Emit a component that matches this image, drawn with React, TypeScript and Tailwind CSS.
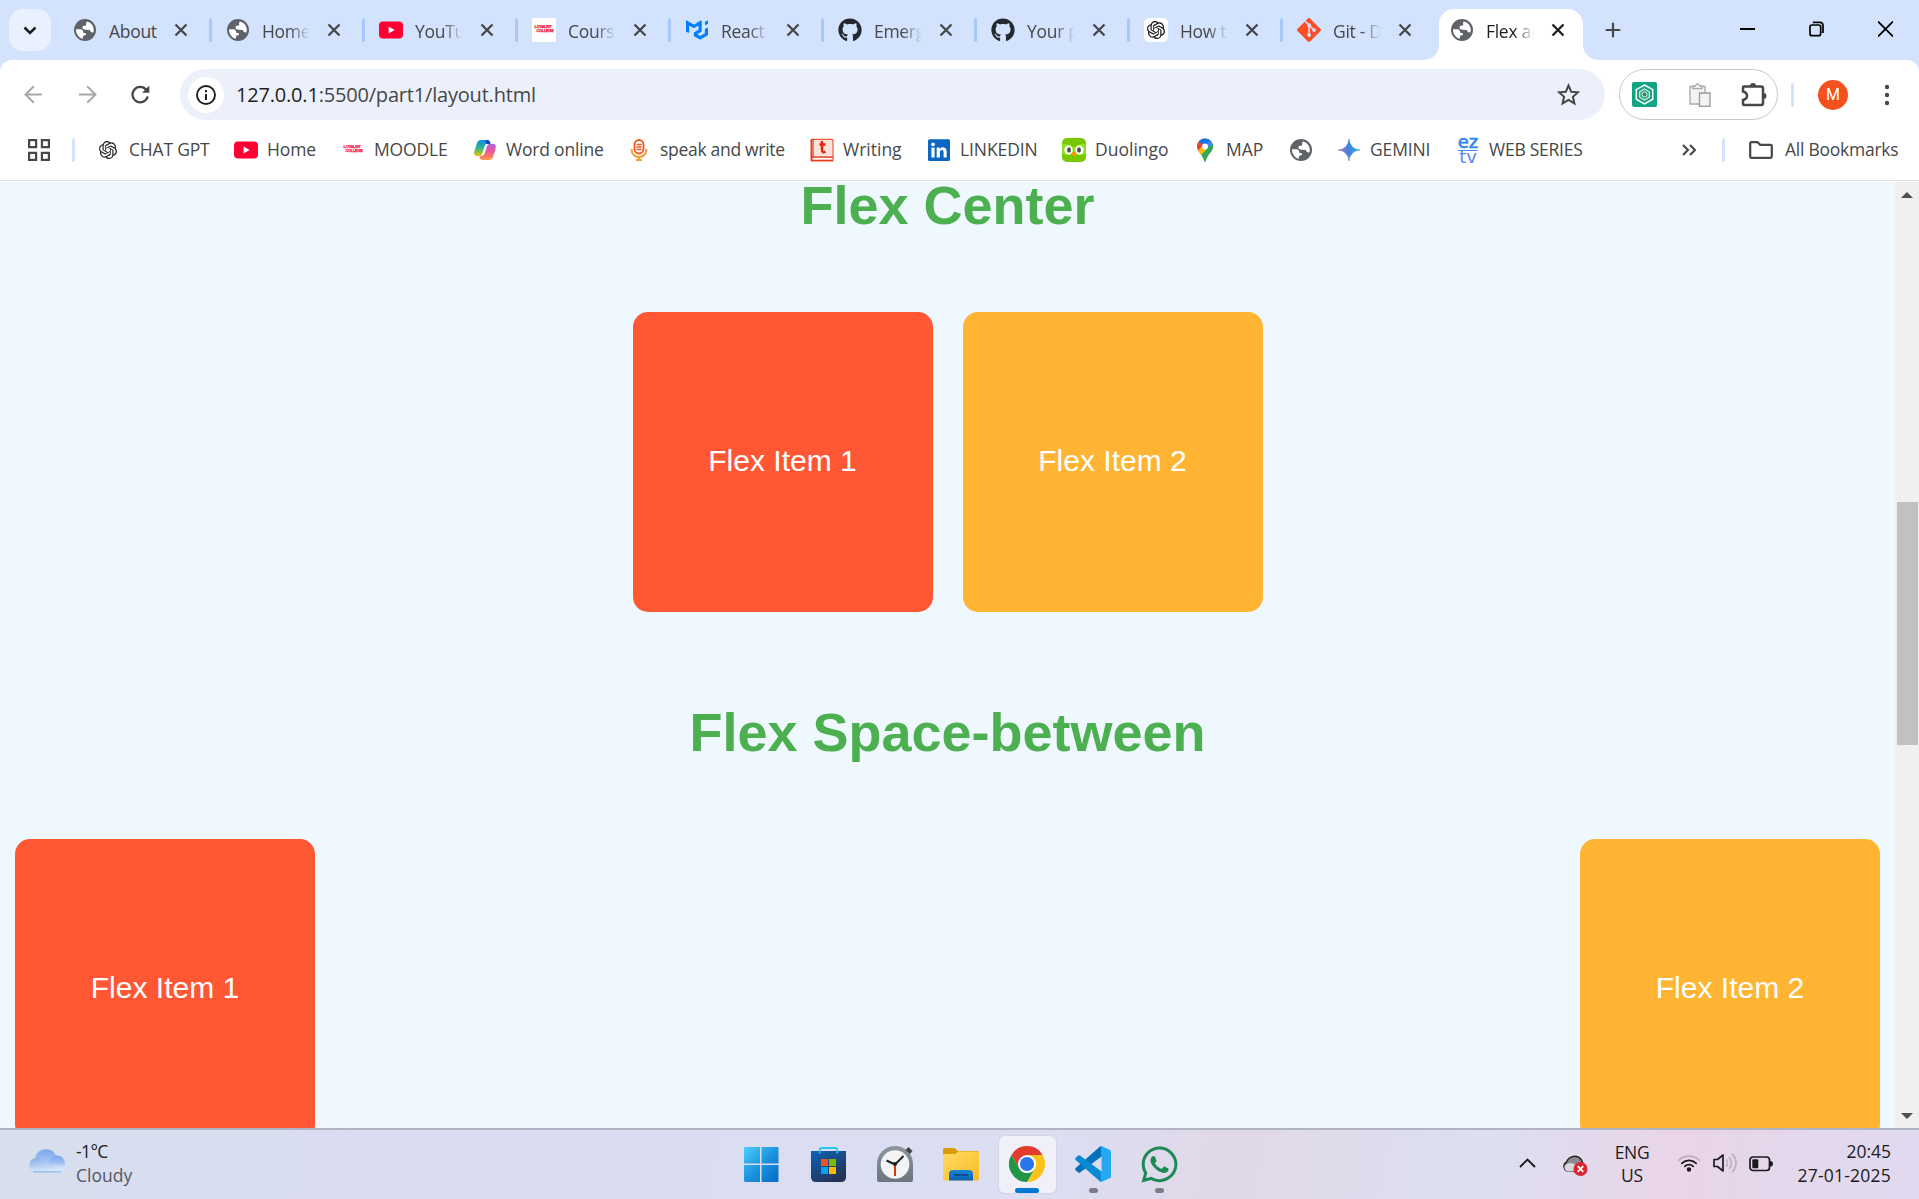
import React from "react";
import { SiOpenai, SiGit, SiMui } from "react-icons/si";
import { FaGithub, FaWhatsapp } from "react-icons/fa";
import { FiPlus } from "react-icons/fi";

type IconFn = () => React.ReactElement;

const Globe: IconFn = () => (
  <svg width="22" height="22" viewBox="0 0 22 22">
    <circle cx="11" cy="11" r="11" fill="#5f6368" />
    <path d="M2 10.3 H6.6 C8.6 10.3 8.9 12 9.3 13.4 C9.7 14.2 11.5 13.7 12 14.7 C12.4 15.6 11.2 16.3 10 16.5 C8.8 16.7 9.2 18.2 8.6 19.7 C4.700 18.700 2 15 2 10.300 Z" fill="#fff" />
    <path d="M12.800 2.400 C17 3.200 19.800 6.900 19.800 11 C19.800 12 19.600 12.700 19.300 13.400 L17.600 13.300 C16.300 13.200 16.800 11.200 15.400 11 L11.800 10.800 C10 10.700 8.200 9.700 8.400 8 C8.600 6.600 10.200 6.900 11.600 6.600 C13.100 6.200 11.200 4.300 12.800 2.400 Z" fill="#fff" />
  </svg>
);

const YouTube: IconFn = () => (
  <svg width="24" height="24" viewBox="0 0 24 24">
    <rect x="0" y="3.600" width="24" height="16.800" rx="4" fill="#ff0033" />
    <path d="M9.600 8.600 L15.600 12 L9.600 15.400 Z" fill="#fff" />
  </svg>
);

const Loyalist: IconFn = () => (
  <div className="flex h-6 w-6 flex-col items-center justify-center bg-white pb-0.5 font-['Liberation_Sans'] text-[4px] leading-[4.500px] font-black tracking-[-0.300px] text-[#f5143f] [-webkit-text-stroke:0.250px_#f5143f]">
    <span className="mr-0.5">LOYALIST</span>
    <span className="ml-0.5">COLLEGE</span>
  </div>
);

const Mui: IconFn = () => <SiMui size={22} color="#007fff" />;
const GitHub: IconFn = () => <FaGithub size={24} color="#24292f" />;
const Git: IconFn = () => <SiGit size={24} color="#fc4f27" />;
const GptTile: IconFn = () => (
  <div className="flex h-6 w-6 items-center justify-center rounded-[5px] bg-white">
    <SiOpenai size={18} color="#111" />
  </div>
);
const Gpt: IconFn = () => <SiOpenai size={18} color="#1f1f1f" />;

const Copilot: IconFn = () => (
  <svg width="24" height="24" viewBox="0 0 24 24">
    <defs>
      <linearGradient id="cpa" x1="0" y1="0" x2="0" y2="1">
        <stop offset="0" stopColor="#0d8ff0" />
        <stop offset="0.5" stopColor="#2fb38a" />
        <stop offset="1" stopColor="#f5c400" />
      </linearGradient>
      <linearGradient id="cpb" x1="0" y1="0" x2="0" y2="1">
        <stop offset="0" stopColor="#b45be8" />
        <stop offset="0.500" stopColor="#ee5a8c" />
        <stop offset="1" stopColor="#ff9a4a" />
      </linearGradient>
    </defs>
    <path d="M8 2 H14.500 C16.500 2 16.800 3.600 17.300 5.500 H15 C12.700 5.500 12 7 11.300 9.200 L9.300 15.500 C8.700 17.300 7.800 18 6 18 H4 C1 18 0.700 15.500 1.600 12.600 L3.700 5.800 C4.500 3.300 5.500 2 8 2 Z" fill="url(#cpa)" />
    <path d="M12.500 2 C16 1.600 17 3 17.600 6 H14 C13 6 12 4 12.500 2 Z" fill="#1746c9" />
    <path d="M16 22 H9.500 C7.500 22 7 20.500 6.500 18 C9.300 18 11 17.500 12 14.500 L13.900 8.300 C14.500 6.500 15.500 6 17.500 6 H20 C23 6 23.300 8.500 22.400 11.400 L20.300 18.200 C19.500 20.800 18.500 22 16 22 Z" fill="url(#cpb)" />
  </svg>
);

const Mic: IconFn = () => (
  <svg width="24" height="24" viewBox="0 0 24 24" fill="none">
    <path d="M4.800 11 v1.500 a7.200 6.500 0 0 0 14.400 0 V11 M12 19 v3 M9 22 h6" stroke="#f7a13c" strokeWidth="2.200" />
    <rect x="7.500" y="2" width="9" height="13.500" rx="4.500" fill="#fff" stroke="#f0561d" strokeWidth="1.800" />
    <path d="M9.500 6.500 h5 M9.500 9 h5 M9.500 11.500 h5" stroke="#f0561d" strokeWidth="1.500" />
  </svg>
);

const Writing: IconFn = () => (
  <svg width="24" height="24" viewBox="0 0 24 24">
    <rect x="0.500" y="0.700" width="23" height="22.800" rx="1.500" fill="#e5401f" />
    <rect x="4" y="1.800" width="18.500" height="16.500" fill="#fde3dc" />
    <rect x="2.500" y="19.800" width="20" height="1.900" fill="#fff" />
    <rect x="2.600" y="2" width="0.900" height="16" fill="#fbb" />
    <path d="M12 3 V12 C12 14.300 13.300 14.600 15.500 13.700 M9.500 6.500 H15.500" stroke="#e5260b" strokeWidth="2.500" fill="none" />
  </svg>
);

const LinkedIn: IconFn = () => (
  <svg width="24" height="24" viewBox="0 0 24 24">
    <rect x="1" y="1.300" width="22" height="21.700" rx="1.500" fill="#0a66c2" />
    <circle cx="6" cy="6.300" r="1.900" fill="#fff" />
    <path d="M4.400 9.500 h3.200 v10 h-3.200 z M9.700 9.500 h3 v1.400 c1.700-2.600 7-2.300 7 2.600 v6 h-3.100 v-5.300 c0-3-3.700-2.700-3.700 0 v5.300 h-3.200 z" fill="#fff" />
  </svg>
);

const Duolingo: IconFn = () => (
  <svg width="24" height="24" viewBox="0 0 24 24">
    <rect width="24" height="24" rx="5" fill="#78c800" />
    <path d="M0 6 Q5 5 12 9 Q19 5 24 6 V16 Q18 19 12 15 Q6 19 0 16 Z" fill="#89e219" />
    <ellipse cx="6.500" cy="12" rx="4.200" ry="4.600" fill="#fff" />
    <ellipse cx="17.500" cy="12" rx="4.200" ry="4.600" fill="#fff" />
    <ellipse cx="7" cy="12" rx="1.900" ry="2.700" fill="#4b4b4b" />
    <ellipse cx="17" cy="12" rx="1.900" ry="2.700" fill="#4b4b4b" />
    <path d="M9.500 15 Q12 12.800 14.500 15 Q14 18 12 18 Q10 18 9.500 15 Z" fill="#ff9600" />
  </svg>
);

const MapPin: IconFn = () => (
  <svg width="24" height="24" viewBox="0 0 24 24">
    <defs>
      <clipPath id="pin">
        <path d="M12 0.500 A8 8 0 0 1 20 8.500 C20 13.500 14 16.500 12.800 23 Q12 24.500 11.200 23 C10 16.500 4 13.500 4 8.500 A8 8 0 0 1 12 0.500 Z" />
      </clipPath>
    </defs>
    <g clipPath="url(#pin)">
      <rect width="24" height="24" fill="#34a853" />
      <path d="M0 0 H24 V3 L12 8 Z" fill="#1a73e8" />
      <path d="M12 8.500 L19 0 L22 8 L16 10 Z" fill="#4285f4" />
      <path d="M0 3 L5.800 3.400 L12 8.500 L5 14 L0 12 Z" fill="#ea4335" />
      <path d="M4 13.500 L10 7.500 L14 12.500 L8 17.500 Z" fill="#fbbc04" />
      <path d="M13.500 11.500 L20 5 L24 8 V24 H12 L8 17 Z" fill="#34a853" />
    </g>
    <circle cx="12" cy="8.400" r="3" fill="#fff" />
  </svg>
);

const Gemini: IconFn = () => (
  <svg width="24" height="24" viewBox="0 0 24 24">
    <defs>
      <linearGradient id="gem" x1="0" y1="0" x2="1" y2="0">
        <stop offset="0.100" stopColor="#9a72c8" />
        <stop offset="0.450" stopColor="#4a7fd6" />
        <stop offset="1" stopColor="#1eaee8" />
      </linearGradient>
    </defs>
    <path d="M12 1 Q13 11 23 12 Q13 13 12 23 Q11 13 1 12 Q11 11 12 1 Z" fill="url(#gem)" stroke="url(#gem)" strokeWidth="0.500" />
  </svg>
);

const EzTv: IconFn = () => (
  <div className="flex h-6 w-6 flex-col items-center font-['DejaVu_Sans'] text-[18px] text-[#2f86f5]">
    <span className="h-[12px] leading-[8px] [-webkit-text-stroke:0.600px_#2f86f5]">ez</span>
    <span className="h-[1px] w-5 shrink-0 bg-[#4d8ff5]" />
    <span className="h-[11px] leading-[12px] text-[#5b86f0]">tv</span>
  </div>
);

type Tab = { title: string; Icon: IconFn; fade?: boolean; sep?: boolean; active?: boolean };
const tabs: Tab[] = [
  { title: "About", Icon: Globe, sep: true },
  { title: "Home", Icon: Globe, fade: true, sep: true },
  { title: "YouTu", Icon: YouTube, fade: true, sep: true },
  { title: "Cours", Icon: Loyalist, fade: true, sep: true },
  { title: "React", Icon: Mui, fade: true, sep: true },
  { title: "Emerg", Icon: GitHub, fade: true, sep: true },
  { title: "Your p", Icon: GitHub, fade: true, sep: true },
  { title: "How t", Icon: GptTile, fade: true, sep: true },
  { title: "Git - D", Icon: Git, fade: true },
  { title: "Flex an", Icon: Globe, fade: true, active: true },
];

const TabItem = ({ tab, showSep }: { tab: Tab; showSep: boolean }) => (
  <div className={`relative flex h-[42px] w-[153px] shrink-0 items-center pl-[14px] ${tab.active ? "text-[#1f1f1f]" : "text-[#45474a]"}`}>
    {tab.active && (
      <svg className="absolute top-0 left-[-12px]" width="174" height="51" viewBox="0 0 174 51">
        <path d="M0 51 A15 15 0 0 0 15 36 V15 A15 15 0 0 1 30 0 H144 A15 15 0 0 1 159 15 V36 A15 15 0 0 0 174 51 Z" fill="#fff" />
      </svg>
    )}
    <div className="relative flex h-6 w-6 shrink-0 items-center justify-center"><tab.Icon /></div>
    <span className={`relative mt-[1px] ml-[12px] w-[48px] overflow-hidden text-[17.500px] leading-6 tracking-[-0.300px] whitespace-nowrap ${tab.fade ? "[mask-image:linear-gradient(to_right,black_58%,transparent_100%)]" : ""}`}>{tab.title}</span>
    <svg className="relative ml-[17px] shrink-0" width="14" height="14" viewBox="0 0 14 14">
      <path d="M1.500 1.500 L12.500 12.500 M12.500 1.500 L1.500 12.500" stroke="currentColor" strokeWidth="2.300" />
    </svg>
    {showSep && <div className="ml-auto h-6 w-[3px] rounded-sm bg-[#a8c7fa]" />}
  </div>
);

const TabStrip = () => (
  <div className="relative flex h-[60px] shrink-0 items-start bg-[#d3e3fd] pt-[9px] pl-[9px]">
    <div className="mr-2 flex h-[42px] w-[42px] items-center justify-center rounded-[14px] bg-[#e9f1fe]">
      <svg width="14" height="9" viewBox="0 0 14 9"><path d="M1.500 1.500 L7 7 L12.500 1.500" fill="none" stroke="#1f1f1f" strokeWidth="2.500" /></svg>
    </div>
    {tabs.map((t) => <TabItem key={t.title} tab={t} showSep={!!t.sep} />)}
    <div className="flex h-[42px] w-12 items-center justify-center"><FiPlus size={22} strokeWidth={2.400} color="#474747" /></div>
    <div className="mt-[12px] mr-[26px] ml-auto flex gap-[54px]">
      <svg width="15" height="16" viewBox="0 0 15 16"><path d="M0 8 H15" stroke="#000" strokeWidth="2" /></svg>
      <svg width="15" height="16" viewBox="0 0 15 16" fill="none" stroke="#000" strokeWidth="1.700">
        <rect x="1" y="4" width="10.700" height="10.700" rx="2" />
        <path d="M3.800 1.300 H11 A3 3 0 0 1 14 4.300 V12" />
      </svg>
      <svg width="15" height="16" viewBox="0 0 15 16"><path d="M0 0.500 L15 15.500 M15 0.500 L0 15.500" stroke="#000" strokeWidth="1.800" /></svg>
    </div>
  </div>
);

const Toolbar = () => (
  <div className="flex h-[69px] shrink-0 items-start rounded-t-[12px] bg-white pt-[9px] pl-[24px]">
    <div className="flex h-[51px] w-[156px] items-center gap-[34.500px]">
      <svg width="19" height="19" viewBox="0 0 19 19" fill="none" stroke="#a8a8a8" strokeWidth="2"><path d="M18 9.500 H2 M9.800 1.200 L1.500 9.500 L9.800 17.800" /></svg>
      <svg width="19" height="19" viewBox="0 0 19 19" fill="none" stroke="#a8a8a8" strokeWidth="2"><path d="M1 9.500 H17 M9.200 1.200 L17.500 9.500 L9.200 17.800" /></svg>
      <svg width="19" height="19" viewBox="0 0 19 19" fill="none"><path d="M16.700 11.500 A7.700 7.700 0 1 1 15.300 4.800" stroke="#474747" strokeWidth="2.300" /><path d="M18.300 0.500 V7.700 H11.100 Z" fill="#474747" /></svg>
    </div>
    <div className="flex h-[51px] w-[1425px] items-center rounded-full bg-[#ecf0fa] pl-[8px]">
      <div className="flex h-9 w-9 items-center justify-center rounded-full bg-white">
        <svg width="20" height="20" viewBox="0 0 20 20"><circle cx="10" cy="10" r="9" fill="none" stroke="#1f1f1f" strokeWidth="1.900" /><path d="M9 9 h2 v6 h-2 z M9 5 h2 v2.200 h-2 z" fill="#1f1f1f" /></svg>
      </div>
      <span className="ml-[12px] text-[20px] leading-none tracking-[-0.190px] text-[#474747]"><span className="text-[#1f1f1f]">127.0.0.1</span>:5500/part1/layout.html</span>
      <svg className="mr-[25px] ml-auto" width="23" height="23" viewBox="0 0 23 23"><path d="M11.500 2.500 L14.200 8.700 L21 9.300 L15.900 13.800 L17.400 20.400 L11.500 16.900 L5.600 20.400 L7.100 13.800 L2 9.300 L8.800 8.700 Z" fill="none" stroke="#474747" strokeWidth="2" /></svg>
    </div>
    <div className="ml-[14px] flex h-[51px] w-[159px] items-center rounded-full border border-[#c7c7c7] pl-[12px]">
      <svg width="25" height="25" viewBox="0 0 25 25">
        <rect width="25" height="25" rx="2" fill="#12a583" />
        <path d="M12.500 3 L20.700 7.700 V17.200 L12.500 22 L4.300 17.200 V7.700 Z" fill="none" stroke="#fff" strokeWidth="1.500" />
        <path d="M12.500 7 L17.300 9.800 V15.200 L12.500 18 L7.700 15.200 V9.800 Z" fill="#3a9e7c" stroke="#d6efe6" strokeWidth="1.200" />
        <circle cx="12.500" cy="12.500" r="2.500" fill="#2b8a62" stroke="#d6efe6" strokeWidth="1" />
      </svg>
      <svg className="ml-[32px]" width="22" height="24" viewBox="0 0 22 24" fill="#f3f3f3" stroke="#aaa" strokeWidth="1.300">
        <path d="M1 3.500 H16 V21 H1 Z" /><path d="M4 5.500 V3 H6.500 Q8.500 -1.500 10.500 3 H13 V5.500 Z" fill="#fff" /><path d="M10.500 10 H21 V23.300 H10.500 Z" stroke="#999" />
      </svg>
      <svg className="ml-[30px]" width="26" height="26" viewBox="0 0 26 26">
        <path d="M3 4.500 H20 Q22 4.500 22 6.500 V21 Q22 23 20 23 H3 Q2 23 2 22 V18 Q6 17 6 13.700 Q6 10.500 2 9.500 V5.500 Q2 4.500 3 4.500 Z" fill="none" stroke="#474747" strokeWidth="2.500" />
        <path d="M9 4 A3 3 0 0 1 15 4 Z M22.500 11 A3 3 0 0 1 22.500 17 Z" fill="#474747" />
      </svg>
    </div>
    <div className="mt-[14px] ml-[13px] h-6 w-[3px] rounded-sm bg-[#d3e3fd]" />
    <div className="mt-[11px] ml-[24px] flex h-[30px] w-[30px] items-center justify-center rounded-full bg-[#f4511e] font-[Roboto] text-[16px] text-white">M</div>
    <svg className="mt-[15px] ml-[36px]" width="6" height="22" viewBox="0 0 6 22" fill="#474747"><circle cx="3" cy="3" r="2.200" /><circle cx="3" cy="11" r="2.200" /><circle cx="3" cy="19" r="2.200" /></svg>
  </div>
);

const bookmarks: { label: string; Icon: IconFn; box: string; tracking: string }[] = [
  { label: "CHAT GPT", Icon: Gpt, box: "w-[138px]", tracking: "tracking-[-0.200px]" },
  { label: "Home", Icon: YouTube, box: "w-[107px]", tracking: "tracking-[-0.150px]" },
  { label: "MOODLE", Icon: Loyalist, box: "w-[132px]", tracking: "tracking-[-0.150px]" },
  { label: "Word online", Icon: Copilot, box: "w-[154px]", tracking: "tracking-[-0.200px]" },
  { label: "speak and write", Icon: Mic, box: "w-[183px]", tracking: "tracking-[-0.300px]" },
  { label: "Writing", Icon: Writing, box: "w-[117px]", tracking: "" },
  { label: "LINKEDIN", Icon: LinkedIn, box: "w-[135px]", tracking: "tracking-[-0.100px]" },
  { label: "Duolingo", Icon: Duolingo, box: "w-[131px]", tracking: "" },
  { label: "MAP", Icon: MapPin, box: "w-[96px]", tracking: "" },
  { label: "", Icon: Globe, box: "w-[48px]", tracking: "" },
  { label: "GEMINI", Icon: Gemini, box: "w-[119px]", tracking: "tracking-[-0.150px]" },
  { label: "WEB SERIES", Icon: EzTv, box: "w-[160px]", tracking: "tracking-[-0.250px]" },
];

const BookmarksBar = () => (
  <div className="mb-px flex h-[52px] shrink-0 items-start border-b border-[#dfdfdf] bg-white pt-[9px] pl-[28px] text-[17.500px] text-[#474747] shadow-[0_1px_0_0_#fff]">
    <svg className="mt-[1px]" width="22" height="22" viewBox="0 0 22 22" fill="none" stroke="#474747" strokeWidth="2.200">
      <path d="M1.100 1.100 h7 v7 h-7 z M13.900 1.100 h7 v7 h-7 z M1.100 13.900 h7 v7 h-7 z M13.900 13.900 h7 v7 h-7 z" />
    </svg>
    <div className="mr-[21px] ml-[22px] h-6 w-[3px] rounded-sm bg-[#d3e3fd]" />
    {bookmarks.map(({ label, Icon, box, tracking }) => (
      <div key={label} className={`flex h-6 shrink-0 items-start ${box}`}>
        <div className="flex h-6 w-6 shrink-0 items-center justify-center"><Icon /></div>
        <span className={`-mt-px ml-[9px] leading-6 whitespace-nowrap ${tracking}`}>{label}</span>
      </div>
    ))}
    <svg className="mt-[6px] ml-[66px]" width="14" height="12" viewBox="0 0 14 12" fill="none" stroke="#474747" strokeWidth="2.100"><path d="M1 1 L6 6 L1 11 M8 1 L13 6 L8 11" /></svg>
    <div className="ml-[26px] h-6 w-[3px] rounded-sm bg-[#d3e3fd]" />
    <svg className="mt-[3px] ml-[24px]" width="24" height="18" viewBox="0 0 24 18" fill="none" stroke="#474747" strokeWidth="2.200"><path d="M1.200 2.500 Q1.200 1.200 2.500 1.200 H8.500 L11.300 3.800 H21.500 Q22.800 3.800 22.800 5 V15.500 Q22.800 16.800 21.500 16.800 H2.500 Q1.200 16.800 1.200 15.500 Z" /></svg>
    <span className="-mt-px ml-[12px] leading-6 tracking-[-0.250px] whitespace-nowrap">All Bookmarks</span>
  </div>
);

const Box = ({ n }: { n: 1 | 2 }) => (
  <div className={`flex h-[300px] w-[300px] items-center justify-center rounded-[15px] pb-[3px] text-[30px] text-white ${n === 1 ? "bg-[#ff5733]" : "bg-[#ffb533]"}`}>Flex Item {n}</div>
);

const Page = () => (
  <div className="flex min-h-0 flex-1 bg-[#f0f8ff]">
    <main className="h-full flex-1 overflow-hidden font-['Liberation_Sans',Arial,sans-serif]">
      <section className="-mt-[8px] h-[527px]">
        <h1 className="text-center text-[54px] leading-[62px] font-bold text-[#4caf50]">Flex Center</h1>
        <div className="mt-[76px] flex justify-center gap-[30px]"><Box n={1} /><Box n={2} /></div>
      </section>
      <section className="h-[527px]">
        <h1 className="text-center text-[54px] leading-[62px] font-bold text-[#4caf50]">Flex Space-between</h1>
        <div className="mt-[76px] flex justify-between px-[15px]"><Box n={1} /><Box n={2} /></div>
      </section>
    </main>
    <div className="flex w-6 flex-col items-center bg-[#f0f0f0] pt-[10px] pb-[9px]">
      <svg width="12" height="6" viewBox="0 0 12 6"><path d="M0 6 L6 0 L12 6 Z" fill="#505050" /></svg>
      <div className="mt-[304px] h-[243px] w-[21px] bg-[#c1c1c1]" />
      <svg className="mt-auto" width="12" height="6" viewBox="0 0 12 6"><path d="M0 0 L6 6 L12 0 Z" fill="#505050" /></svg>
    </div>
  </div>
);

const WinLogo = () => (
  <svg width="36" height="36" viewBox="0 0 36 36">
    <defs><linearGradient id="win" gradientUnits="userSpaceOnUse" x1="0" y1="0" x2="36" y2="36"><stop offset="0" stopColor="#4fd2fc" /><stop offset="0.500" stopColor="#1d95e0" /><stop offset="1" stopColor="#0569c8" /></linearGradient></defs>
    <path d="M2 1 H17 V17.500 H1 V2 Z M18.500 1 H35 L35.500 2 V17.500 H18.500 Z M1 19 H17 V36 H2 L1 35 Z M18.500 19 H35.500 V35 L35 36 H18.500 Z" fill="url(#win)" />
  </svg>
);
const Store = () => (
  <svg width="36" height="36" viewBox="0 0 36 36">
    <defs><linearGradient id="sto" x1="0" y1="0" x2="0.600" y2="1"><stop offset="0" stopColor="#0a64b4" /><stop offset="1" stopColor="#263357" /></linearGradient></defs>
    <path d="M1 5 H36 V31 Q36 36 31 36 H6 Q1 36 1 31 Z" fill="url(#sto)" />
    <path d="M9.700 7.500 V4 Q9.700 2 11.700 2 H25.300 Q27.300 2 27.300 4 V7.500" fill="none" stroke="#2cc3f2" strokeWidth="1.800" />
    <path d="M11 13 h7 v7 h-7 z" fill="#f25022" /><path d="M19 13 h7 v7 h-7 z" fill="#7fba00" /><path d="M11 21 h7 v7 h-7 z" fill="#00a4ef" /><path d="M19 21 h7 v7 h-7 z" fill="#ffb900" />
  </svg>
);
const Clock = () => (
  <svg width="36" height="36" viewBox="0 0 36 36">
    <defs><linearGradient id="clk" x1="0" y1="0" x2="0" y2="1"><stop offset="0" stopColor="#8d959e" /><stop offset="1" stopColor="#6b757d" /></linearGradient></defs>
    <path d="M18 0 A18 18 0 0 1 36 18 V34 Q36 36 34 36 H2 Q0 36 0 34 V18 A18 18 0 0 1 18 0 Z" fill="url(#clk)" />
    <path d="M28.500 4 L31.500 1 L35.500 5 L33 8 Z" fill="#444" />
    <circle cx="18" cy="18.500" r="14.300" fill="#f3f4f5" />
    <path d="M18 18.500 L26.500 10 M18 18.500 L9.500 14.500" stroke="#222" strokeWidth="2" />
    <path d="M18 18.500 V30" stroke="#d83b01" strokeWidth="2" /><circle cx="18" cy="18" r="2" fill="#222" />
  </svg>
);
const Explorer = () => (
  <svg width="36" height="36" viewBox="0 0 36 36">
    <defs>
      <linearGradient id="fol" x1="0" y1="0" x2="1" y2="1"><stop offset="0" stopColor="#ffdc66" /><stop offset="1" stopColor="#fabb24" /></linearGradient>
      <linearGradient id="fob" x1="0" y1="0" x2="0" y2="1"><stop offset="0" stopColor="#1a86d6" /><stop offset="1" stopColor="#0a62b6" /></linearGradient>
    </defs>
    <path d="M0 3.500 Q0 2 1.500 2 H11.500 L15 5 H34.500 Q36 5 36 6.500 V12 H0 Z" fill="#dc9c09" />
    <path d="M0 9 Q0 8 1 8 H12 L15.500 5.500 H34.500 Q36 5.500 36 7 V33 Q36 34.500 34.500 34.500 H1.500 Q0 34.500 0 33 Z" fill="url(#fol)" />
    <path d="M6 34.500 V28 Q6 24 10 24 H26 Q30 24 30 28 V34.500 Z" fill="url(#fob)" /><path d="M11 29 H25" stroke="#0a4a8c" strokeWidth="1.800" />
  </svg>
);
const Chrome = () => (
  <svg width="36" height="36" viewBox="0 0 36 36">
    <path d="M2.410 9 A18 18 0 0 1 33.590 9 H18 L10.200 22.500 Z" fill="#e33b2e" />
    <path d="M33.590 9 A18 18 0 0 1 18 36 L25.800 22.500 A9 9 0 0 0 25.800 13.500 L18 9 Z" fill="#fcc31b" />
    <path d="M18 36 A18 18 0 0 1 2.410 9 L10.200 22.500 A9 9 0 0 0 25.800 22.500 Z" fill="#1e9645" />
    <circle cx="18" cy="18" r="9" fill="#fff" /><circle cx="18" cy="18" r="7.100" fill="#2b76ea" />
  </svg>
);
const VsCode = () => (
  <svg width="36" height="36" viewBox="0 0 36 36">
    <path d="M26.500 0 L35 4 Q36 4.500 36 5.500 V30.500 Q36 31.500 35 32 L26.500 36 Z" fill="#25a8f2" />
    <path d="M26.500 0 V10.500 L5 26.500 Q4 27.200 3 26.300 L0.700 24.200 Q-0.400 23 0.700 22 L25 0.600 Q26 0 26.500 0 Z" fill="#0472b8" />
    <path d="M26.500 36 V25.500 L5 9.500 Q4 8.800 3 9.700 L0.700 11.800 Q-0.400 13 0.700 14 L25 35.400 Q26 36 26.500 36 Z" fill="#0a8ad6" />
  </svg>
);
const WhatsApp = () => <FaWhatsapp size={41} color="#1b8a55" className="shrink-0" />;

const apps = [
  { name: "start", Icon: WinLogo, dot: "", gap: "" },
  { name: "store", Icon: Store, dot: "", gap: "ml-px" },
  { name: "clock", Icon: Clock, dot: "", gap: "ml-px" },
  { name: "explorer", Icon: Explorer, dot: "", gap: "" },
  { name: "chrome", Icon: Chrome, dot: "h-[5px] w-6 bg-[#0078d4]", gap: "" },
  { name: "vscode", Icon: VsCode, dot: "h-[5px] w-[9px] bg-[#7d7b86]", gap: "" },
  { name: "whatsapp", Icon: WhatsApp, dot: "h-[5px] w-[9px] bg-[#7d7b86]", gap: "" },
];

const Taskbar = () => (
  <div className="flex h-[71px] shrink-0 border-t-2 border-[#b2b3c1] bg-[linear-gradient(100deg,#d7dfee_0%,#dadcf1_20%,#dcdef2_55%,#e1d8e7_64%,#dce0f1_77%,#ead4e8_87%,#e5d7eb_92%,#e0daf0_100%)] text-[17.500px] text-[#1b1b1f]">
    <div className="flex w-[728px] items-start pl-[29px]">
      <svg className="mt-[19px]" width="36" height="24" viewBox="0 0 36 24">
        <defs>
          <linearGradient id="cl1" x1="0" y1="0" x2="0" y2="1"><stop offset="0" stopColor="#7aa5ec" /><stop offset="1" stopColor="#c9dffa" /></linearGradient>
          <linearGradient id="cl2" x1="0" y1="0" x2="0.300" y2="1"><stop offset="0" stopColor="#86abe9" /><stop offset="1" stopColor="#d6e9fc" /></linearGradient>
        </defs>
        <circle cx="17" cy="11.500" r="11.300" fill="url(#cl1)" />
        <circle cx="28" cy="14.500" r="8" fill="url(#cl1)" />
        <path d="M7.500 9 C12 9 14.500 12 16 15 C20 14 24 15 35.800 16 C35.800 20 33 23.300 29 23.300 H7 A7.100 7.100 0 0 1 7.500 9 Z" fill="url(#cl2)" />
        <path d="M4 22.800 H32" stroke="#8fb1ee" strokeWidth="1.200" />
      </svg>
      <div className="mt-[9px] ml-[11px] leading-6"><div className="tracking-[-0.600px]">-1°C</div><div className="text-[#55585f]">Cloudy</div></div>
    </div>
    {apps.map(({ name, Icon, dot, gap }) => (
      <div key={name} className={`flex w-[66px] shrink-0 justify-center pt-[6px] ${gap}`}>
        <div className={`relative flex h-[57px] w-[57px] items-center justify-center rounded-[6px] pb-[1px] ${name === "chrome" ? "bg-[#eff0fa] shadow-[0_0_0_1px_#d3d5e5]" : ""}`}>
          <Icon />
          <div className={`absolute bottom-0 rounded-full ${dot}`} />
        </div>
      </div>
    ))}
    <div className="mr-[28px] ml-auto flex h-[69px] items-start">
      <svg className="mt-[28px]" width="17" height="10" viewBox="0 0 17 10"><path d="M1 9 L8.500 1.500 L16 9" fill="none" stroke="#1b1b1f" strokeWidth="1.900" /></svg>
      <svg className="mt-[25px] ml-[27px]" width="25" height="22" viewBox="0 0 25 22">
        <path d="M5.500 16 A4.800 4.800 0 0 1 3.500 7 A8.500 8.500 0 0 1 18.500 5 L21 11 L12 16.500 Z" fill="#8b8b8f" stroke="#222" strokeWidth="1.500" />
        <path d="M1.500 11 Q6 6 11 9 L17 12 L12 16.500 H5.500 A4.500 4.500 0 0 1 1.500 11" fill="#d8d8dc" />
        <circle cx="17.500" cy="14" r="7" fill="#dc2430" /><path d="M14.700 11.200 L20.300 16.800 M20.300 11.200 L14.700 16.800" stroke="#fff" strokeWidth="1.700" />
      </svg>
      <div className="mt-[11px] ml-[26px] w-[36px] text-center leading-[23px] tracking-[-0.300px]"><div>ENG</div><div>US</div></div>
      <svg className="mt-[24px] ml-[27px]" width="24" height="18" viewBox="0 0 24 18" fill="none" stroke="#1b1b1f" strokeWidth="1.700" strokeLinecap="round">
        <path d="M1.500 6.500 A15 15 0 0 1 22.500 6.500" stroke="#b9aebd" /><path d="M4.800 9.300 A10.500 10.500 0 0 1 19.200 9.300 M7.800 12.300 A6.200 6.200 0 0 1 16.200 12.300" /><circle cx="12" cy="15.500" r="1.400" fill="#1b1b1f" />
      </svg>
      <svg className="mt-[23px] ml-[12px]" width="24" height="20" viewBox="0 0 24 20" fill="none" stroke="#1b1b1f" strokeWidth="1.700" strokeLinejoin="round">
        <path d="M1 6.500 H4.500 L10 2 V18 L4.500 13.500 H1 Z" /><path d="M13 6.500 A5 5 0 0 1 13 13.500 M16 4 A8.500 8.500 0 0 1 16 16 M19 1 A12 12 0 0 1 19 19" stroke="#b9b0c4" />
      </svg>
      <svg className="mt-[26px] ml-[12px]" width="24" height="16" viewBox="0 0 24 16"><rect x="1" y="1" width="19.500" height="13.500" rx="3" fill="none" stroke="#1b1b1f" strokeWidth="1.700" /><rect x="3.300" y="3.300" width="6" height="9" rx="1" fill="#1b1b1f" /><path d="M21 5 Q24 5 24 7.700 Q24 10.500 21 10.500 Z" fill="#1b1b1f" /></svg>
      <div className="mt-[9px] ml-[21px] w-[97px] text-right leading-6 whitespace-nowrap"><div>20:45</div><div className="tracking-[0.220px]">27-01-2025</div></div>
    </div>
  </div>
);

export default function App() {
  return (
    <div className="flex h-[1199px] w-[1919px] flex-col overflow-hidden bg-[#d3e3fd] font-['Open_Sans','Noto_Sans',sans-serif]">
      <TabStrip />
      <Toolbar />
      <BookmarksBar />
      <Page />
      <Taskbar />
    </div>
  );
}
